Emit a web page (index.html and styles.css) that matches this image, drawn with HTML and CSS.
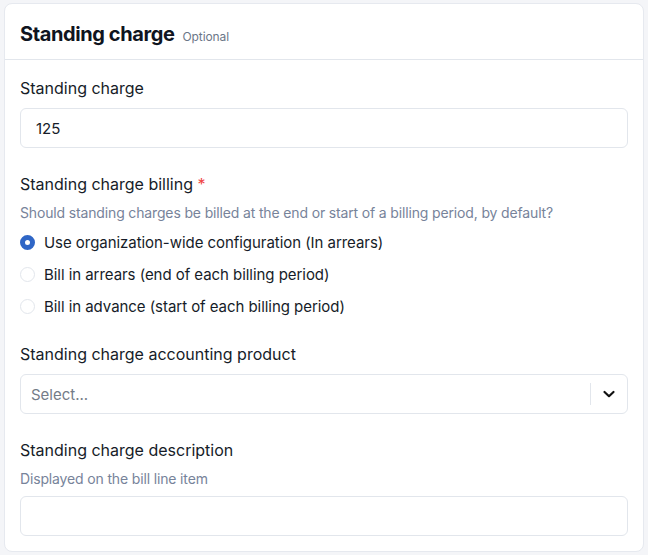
FILE: index.html
```html
<!DOCTYPE html>
<html lang="en">
<head>
<meta charset="utf-8">
<title>Standing charge</title>
<link rel="stylesheet" href="styles.css">
</head>
<body>
<div class="card">
  <div class="card-header">
    <h2 class="title">Standing charge</h2>
    <span class="optional">Optional</span>
  </div>
  <div class="card-body">
    <div class="field">
      <label class="label">Standing charge</label>
      <div class="input"><span class="value">125</span></div>
    </div>
    <div class="field">
      <label class="label">Standing charge billing <span class="req">*</span></label>
      <div class="help">Should standing charges be billed at the end or start of a billing period, by default?</div>
      <div class="radios">
        <div class="radio-row"><span class="radio checked"></span><span>Use organization-wide configuration (In arrears)</span></div>
        <div class="radio-row"><span class="radio"></span><span>Bill in arrears (end of each billing period)</span></div>
        <div class="radio-row"><span class="radio"></span><span>Bill in advance (start of each billing period)</span></div>
      </div>
    </div>
    <div class="field">
      <label class="label">Standing charge accounting product</label>
      <div class="select">
        <span class="placeholder">Select...</span>
        <span class="sep"></span>
        <span class="chev">
          <svg width="14" height="14" viewBox="0 0 14 14"><path d="M2.5 5 L7 9.2 L11.5 5" fill="none" stroke="#111" stroke-width="2.2" stroke-linecap="round" stroke-linejoin="round"/></svg>
        </span>
      </div>
    </div>
    <div class="field">
      <label class="label">Standing charge description</label>
      <div class="help help-input">Displayed on the bill line item</div>
      <div class="input"></div>
    </div>
  </div>
</div>
</body>
</html>
```

FILE: styles.css
```css
* { box-sizing: border-box; }
html, body { margin: 0; padding: 0; }
body {
  background: #f4f5f8;
  font-family: Inter, "Noto Sans", sans-serif;
  color: #1e2533;
  padding: 3px 4px;
}
.card {
  background: #fff;
  border: 1px solid #e6e9ef;
  border-radius: 8px;
  width: 640px;
  height: 549px;
}
.card-header {
  height: 56px;
  border-bottom: 1px solid #e2e6ec;
  display: flex;
  align-items: baseline;
  padding: 17px 15px 0;
  gap: 8px;
}
.title {
  margin: 0;
  font-size: 20px;
  font-weight: 700;
  color: #0f1420;
  line-height: 26px;
  letter-spacing: -0.4px;
}
.optional {
  font-size: 12px;
  color: #6b7688;
  letter-spacing: -0.1px;
}
.card-body {
  padding: 16px 15px 16px;
  display: flex;
  flex-direction: column;
  gap: 24px;
}
.field { display: flex; flex-direction: column; }
.label {
  font-size: 16px;
  line-height: 24px;
  color: #161c28;
  margin-bottom: 8px;
}
.req { color: #ef4444; }
.help {
  font-size: 14px;
  line-height: 20px;
  color: #77839a;
  margin-top: -1px;
  margin-bottom: 7px;
  letter-spacing: -0.15px;
}
.input {
  height: 40px;
  border: 1px solid #e2e6ec;
  border-radius: 6px;
  display: flex;
  align-items: center;
  padding: 0 15px;
  font-size: 15px;
  color: #161c28;
}
.radios { display: flex; flex-direction: column; gap: 8px; }
.radio-row {
  display: flex;
  align-items: center;
  gap: 9px;
  height: 24px;
  font-size: 15px;
  color: #161c28;
  letter-spacing: -0.05px;
}
.radio {
  width: 15px;
  height: 15px;
  border-radius: 50%;
  border: 1px solid #e2e6ec;
  background: #fff;
  flex: none;
}
.radio.checked {
  border: 5px solid #2f66c6;
  background: #fff;
}
.select {
  height: 40px;
  border: 1px solid #e2e6ec;
  border-radius: 6px;
  display: flex;
  align-items: center;
  padding-left: 10px;
}
.placeholder {
  flex: 1;
  font-size: 15px;
  color: #747c88;
}
.sep {
  width: 1px;
  height: 22px;
  background: #e2e6ec;
}
.chev {
  width: 36px;
  display: flex;
  justify-content: center;
  align-items: center;
}
.chev svg { display: block; }
```
